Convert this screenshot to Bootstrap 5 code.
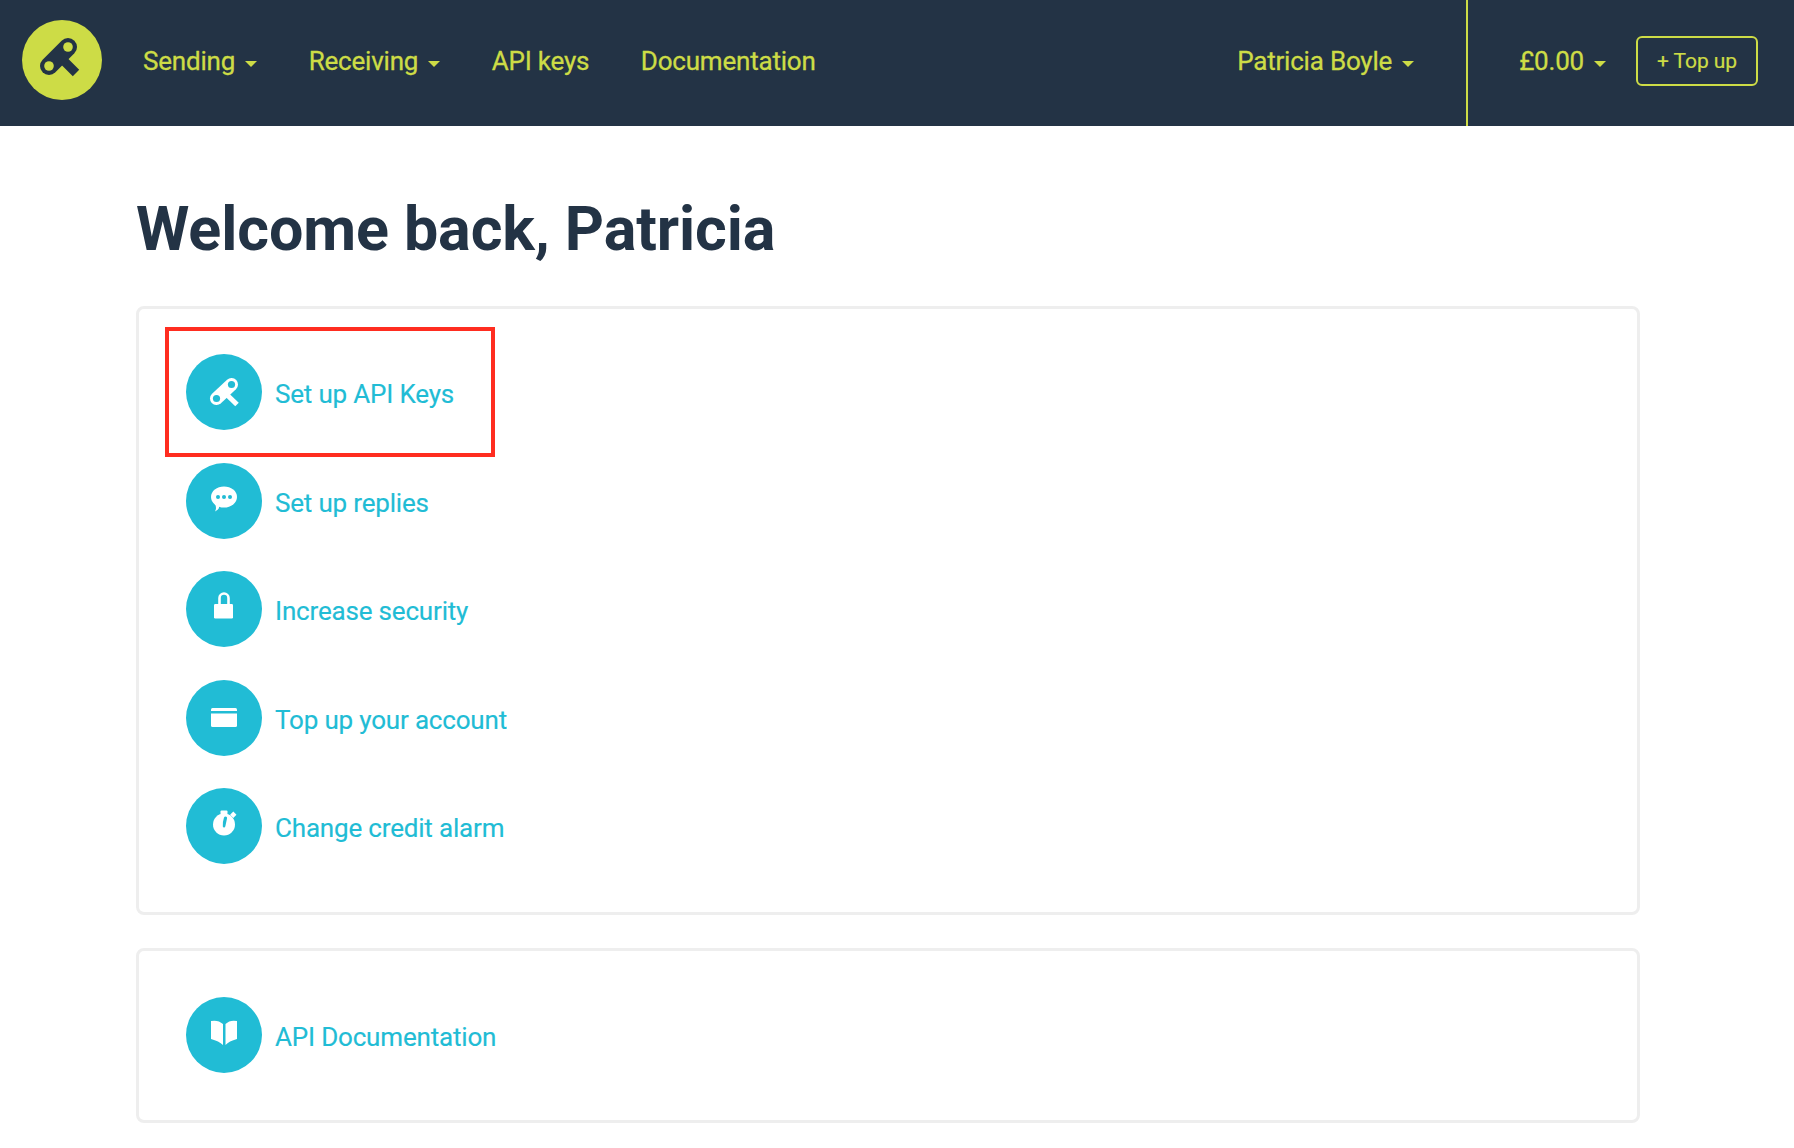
<!DOCTYPE html>
<html lang="en">
<head>
<meta charset="utf-8">
<title>Dashboard</title>
<link href="https://cdn.jsdelivr.net/npm/bootstrap@5.3.0/dist/css/bootstrap.min.css" rel="stylesheet">
<style>
body { font-family: Roboto, "Liberation Sans", sans-serif; background: #fff; color: #233345; }
.top-bar { background: #233345; height: 126px; padding: 0 36px 0 22px; align-items: stretch; flex-wrap: nowrap; }
.logo-link { display: flex; align-items: center; padding: 0 0 6px; margin: 0 15px 0 0; }
.logo-link svg { display: block; }
.top-nav { align-items: center; flex-direction: row; gap: 51.5px; margin-left: 26px; padding-bottom: 4px; }
.top-link { color: #cddc46; font-size: 26px; line-height: 32px; padding: 0; white-space: nowrap; letter-spacing: -0.2px; -webkit-text-stroke: 0.3px #cddc46; }
.top-link:hover, .top-link:focus { color: #cddc46; }
.top-caret { display: inline-block; width: 0; height: 0; margin-left: 10px; vertical-align: 3px; border-top: 6px solid #cddc46; border-left: 6px solid transparent; border-right: 6px solid transparent; }
.balance-zone { border-left: 2px solid #cddc46; padding: 0 0 4px 51px; margin-left: 52px; gap: 30px; }
.topup-btn { width: 122px; height: 50px; padding: 0; color: #cddc46; border: 2px solid #cddc46; border-radius: 6px; font-size: 21px; line-height: 46px; background: transparent; -webkit-text-stroke: 0.2px #cddc46; letter-spacing: -0.1px; }
.topup-btn:hover { color: #cddc46; border-color: #cddc46; background: transparent; }
.page-wrap { margin-left: 136px; width: 1504px; }
.page-title { font-family: Roboto, "Liberation Sans", sans-serif; font-weight: 700; font-size: 61px; line-height: 70px; color: #233345; margin: 0; padding: 68px 0 42px; letter-spacing: -0.1px; }
.panel { border: 3px solid #eeeeee; border-radius: 8px; background: #fff; padding: 45px 0 48px 47px; position: relative; }
.panel + .panel { margin-top: 33px; padding-top: 46px; padding-bottom: 47px; }
.task-list { display: flex; flex-direction: column; gap: 32.5px; }
.task-link { display: flex; align-items: center; gap: 13px; color: #21bcd5; font-size: 26px; line-height: 32px; text-decoration: none; letter-spacing: -0.18px; -webkit-text-stroke: 0.15px #21bcd5; }
.task-link:hover { color: #21bcd5; }
.task-text { position: relative; top: 2px; }
.task-dot { width: 76px; height: 76px; flex: 0 0 76px; background: #21bcd5; }
.task-dot svg { display: block; }
.red-mark { position: absolute; left: 26px; top: 18px; width: 330px; height: 130px; border: 4px solid #ff2d20; pointer-events: none; }
</style>
</head>
<body>
<nav class="navbar top-bar d-flex justify-content-start">
  <a class="logo-link" href="#" aria-label="Home">
    <svg width="80" height="80" viewBox="0 0 80 80">
      <circle cx="40" cy="40" r="40" fill="#cddc46"/>
      <path d="M40 39 L54 53" stroke="#233345" stroke-width="9" fill="none"/>
      <path d="M27 46 L46 27" stroke="#233345" stroke-width="18" stroke-linecap="round" fill="none"/>
      <circle cx="27" cy="46" r="4.8" fill="#cddc46"/>
      <circle cx="46" cy="27" r="4.8" fill="#cddc46"/>
    </svg>
  </a>
  <ul class="navbar-nav top-nav">
    <li class="nav-item"><a class="nav-link top-link" href="#">Sending<span class="top-caret"></span></a></li>
    <li class="nav-item"><a class="nav-link top-link" href="#">Receiving<span class="top-caret"></span></a></li>
    <li class="nav-item"><a class="nav-link top-link" href="#">API keys</a></li>
    <li class="nav-item"><a class="nav-link top-link" href="#">Documentation</a></li>
  </ul>
  <ul class="navbar-nav top-nav ms-auto">
    <li class="nav-item"><a class="nav-link top-link" href="#">Patricia Boyle<span class="top-caret"></span></a></li>
  </ul>
  <div class="d-flex align-items-center balance-zone">
    <a class="nav-link top-link" href="#">£0.00<span class="top-caret"></span></a>
    <a class="btn topup-btn" href="#">+ Top up</a>
  </div>
</nav>

<main class="page-wrap">
  <h1 class="page-title">Welcome back, Patricia</h1>

  <section class="panel">
    <div class="red-mark"></div>
    <div class="task-list">
      <a class="task-link" href="#">
        <span class="task-dot rounded-circle">
          <svg width="76" height="76" viewBox="0 0 76 76">
            <path d="M38 38 L51 50.5" stroke="#fff" stroke-width="5" fill="none"/>
            <path d="M30.5 44.5 L45.5 30.5" stroke="#fff" stroke-width="13" stroke-linecap="round" fill="none"/>
            <circle cx="30.5" cy="44.5" r="3.6" fill="#21bcd5"/>
            <circle cx="45.5" cy="30.5" r="3.6" fill="#21bcd5"/>
          </svg>
        </span>
        <span class="task-text">Set up API Keys</span>
      </a>
      <a class="task-link" href="#">
        <span class="task-dot rounded-circle">
          <svg width="76" height="76" viewBox="0 0 76 76">
            <ellipse cx="38" cy="34" rx="13" ry="10.5" fill="#fff"/>
            <path d="M31 41 L33 43 Q34 46 29 48.5 Q31 45 29 41 Z" fill="#fff"/>
            <circle cx="32" cy="34" r="2" fill="#21bcd5"/>
            <circle cx="38" cy="34" r="2" fill="#21bcd5"/>
            <circle cx="44" cy="34" r="2" fill="#21bcd5"/>
          </svg>
        </span>
        <span class="task-text">Set up replies</span>
      </a>
      <a class="task-link" href="#">
        <span class="task-dot rounded-circle">
          <svg width="76" height="76" viewBox="0 0 76 76">
            <path d="M33.5 36 V27 a4.5 4.5 0 0 1 9 0 V36" stroke="#fff" stroke-width="2.6" fill="none"/>
            <rect x="28" y="33" width="19" height="14.5" rx="1.2" fill="#fff"/>
          </svg>
        </span>
        <span class="task-text">Increase security</span>
      </a>
      <a class="task-link" href="#">
        <span class="task-dot rounded-circle">
          <svg width="76" height="76" viewBox="0 0 76 76">
            <path d="M25 31 v-1.5 a1.5 1.5 0 0 1 1.5 -1.5 h23 a1.5 1.5 0 0 1 1.5 1.5 v1.5 Z" fill="#fff"/>
            <path d="M25 33.5 h26 v12 a1.5 1.5 0 0 1 -1.5 1.5 h-23 a1.5 1.5 0 0 1 -1.5 -1.5 Z" fill="#fff"/>
          </svg>
        </span>
        <span class="task-text">Top up your account</span>
      </a>
      <a class="task-link" href="#">
        <span class="task-dot rounded-circle">
          <svg width="76" height="76" viewBox="0 0 76 76">
            <circle cx="38" cy="36.5" r="11" fill="#fff"/>
            <rect x="34.5" y="22.5" width="7" height="4" rx="1" fill="#fff"/>
            <rect x="45" y="24.5" width="4.5" height="4.5" transform="rotate(45 47.3 26.8)" fill="#fff"/>
            <path d="M39.5 28.5 Q41.5 28.5 41 30.5 L39.3 38.5 Q38 40.8 36.8 38.5 Q36.5 34 38 29.5 Q38.5 28.5 39.5 28.5 Z" fill="#21bcd5"/>
          </svg>
        </span>
        <span class="task-text">Change credit alarm</span>
      </a>
    </div>
  </section>

  <section class="panel">
    <div class="task-list">
      <a class="task-link" href="#">
        <span class="task-dot rounded-circle">
          <svg width="76" height="76" viewBox="0 0 76 76">
            <path d="M25 24 Q32 22.5 37 27 V48 Q33 44 25 42 Z" fill="#fff"/>
            <path d="M51 24 Q44 22.5 39.5 27 V48 Q43 44 51 42 Z" fill="#fff"/>
          </svg>
        </span>
        <span class="task-text">API Documentation</span>
      </a>
    </div>
  </section>
</main>
<script src="https://cdn.jsdelivr.net/npm/bootstrap@5.3.0/dist/js/bootstrap.bundle.min.js"></script>
</body>
</html>
